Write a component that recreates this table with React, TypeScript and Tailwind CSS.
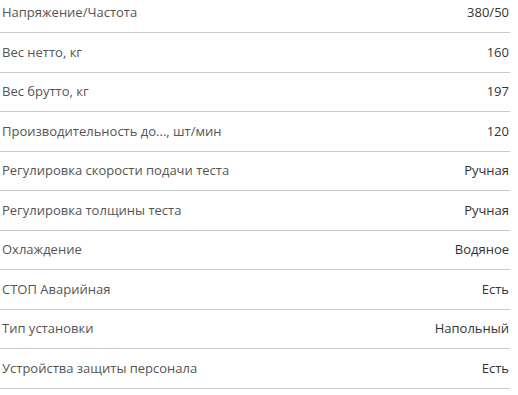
const specs: [string, string][] = [
  ["Напряжение/Частота", "380/50"],
  ["Вес нетто, кг", "160"],
  ["Вес брутто, кг", "197"],
  ["Производительность до..., шт/мин", "120"],
  ["Регулировка скорости подачи теста", "Ручная"],
  ["Регулировка толщины теста", "Ручная"],
  ["Охлаждение", "Водяное"],
  ["СТОП Аварийная", "Есть"],
  ["Тип установки", "Напольный"],
  ["Устройства защиты персонала", "Есть"],
];

const App = () => {
  return (
    <div className="w-[518px] h-[395px] overflow-hidden bg-white font-['Open_Sans',sans-serif] text-[13px]">
      <div className="w-[510px] -mt-[6.5px]">
        {specs.map(([label, value]) => (
          <div
            key={label}
            className="flex items-center justify-between h-[39.5px] border-b border-[#c9c9c9] pl-[2px] pr-[1px]"
          >
            <span className="text-[#555]">{label}</span>
            <span className="text-[#333]">{value}</span>
          </div>
        ))}
      </div>
    </div>
  );
};

export default App;
